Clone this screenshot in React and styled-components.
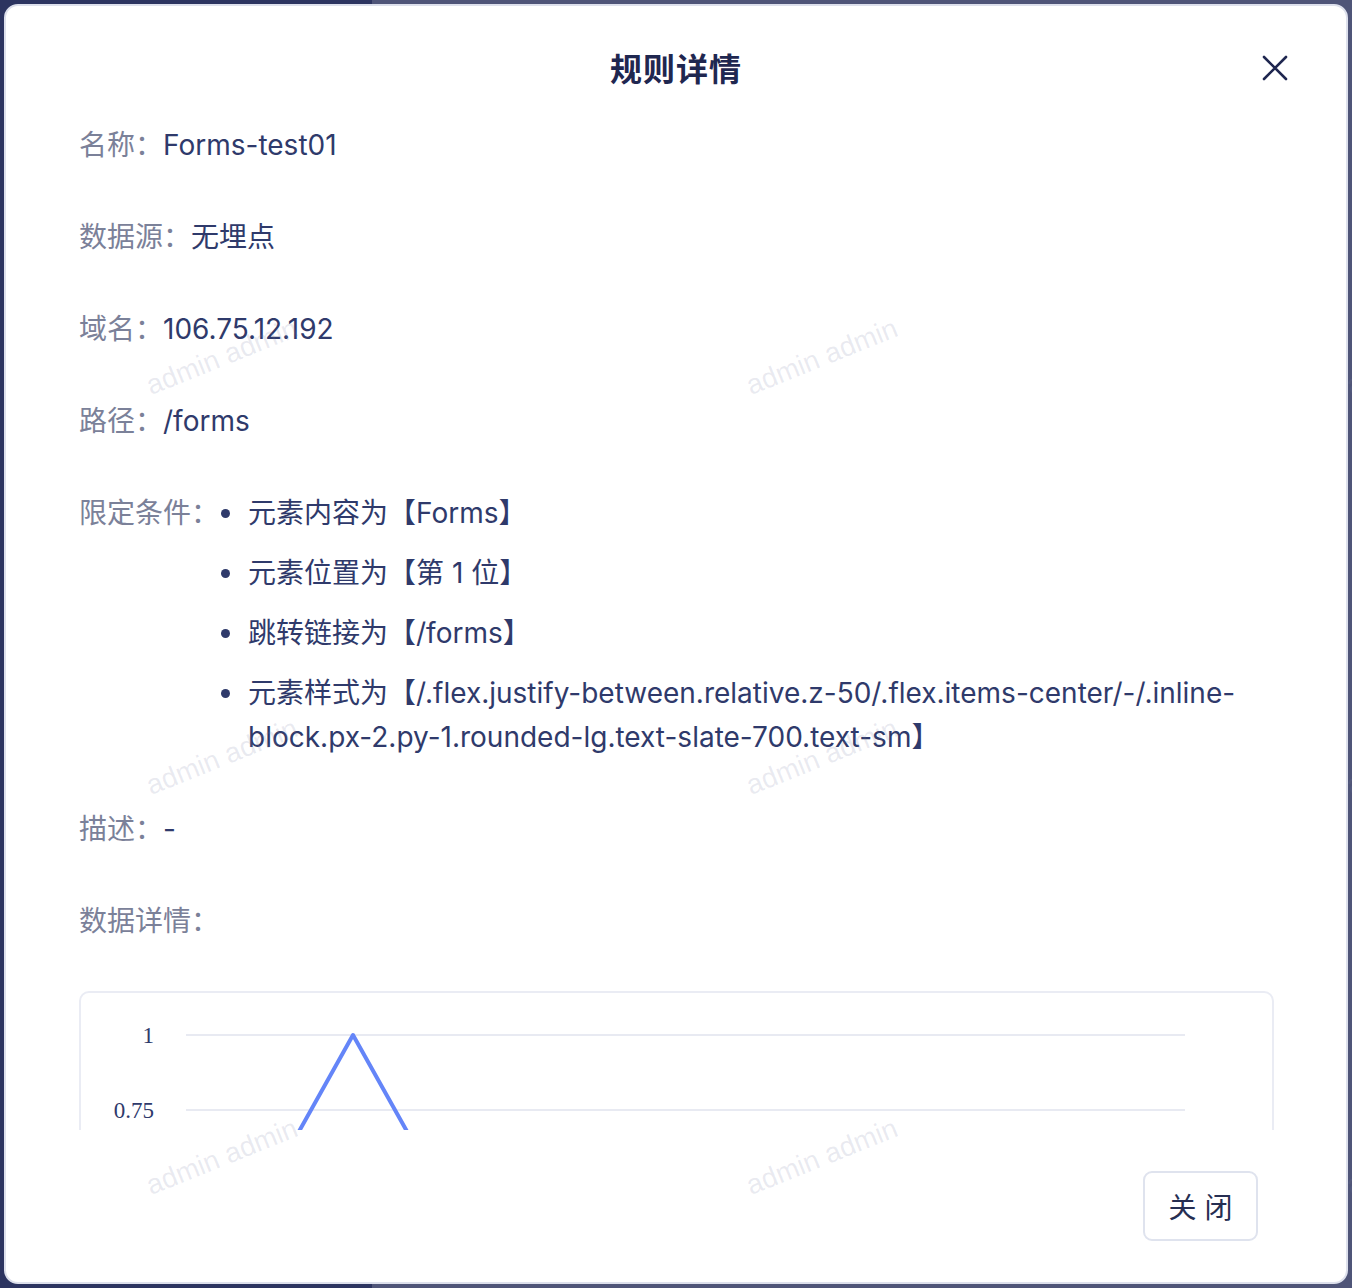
import styled, { createGlobalStyle } from 'styled-components'

const GlobalStyle = createGlobalStyle`
  html, body {
    margin: 0;
    padding: 0;
  }
  body {
    font-family: Inter, "Noto Sans CJK SC", sans-serif;
    -webkit-font-smoothing: antialiased;
  }
  * {
    box-sizing: border-box;
  }
`

const Page = styled.div`
  position: relative;
  display: flex;
  width: 1352px;
  height: 1288px;
  overflow: hidden;
`
const Sidebar = styled.div`
  width: 372px;
  background-color: #2c3460;
`
const Main = styled.div`
  flex: 1;
  background-color: #4f5578;
`
const Overlay = styled.div`
  position: absolute;
  inset: 0;
  padding: 4px;
  display: flex;
`
const Modal = styled.div`
  flex: 1;
  display: flex;
  flex-direction: column;
  background-color: #fff;
  border: 2px solid #dde0ec;
  border-radius: 14px;
  overflow: hidden;
`
const Header = styled.div`
  position: relative;
  display: flex;
  justify-content: center;
  padding-top: 42px;
  height: 100px;
`
const Title = styled.div`
  font-size: 32px;
  line-height: 44px;
  font-weight: 700;
  color: #1f2750;
  letter-spacing: 1px;
`
const CloseBtn = styled.div`
  position: absolute;
  top: 49px;
  right: 58px;
  width: 26px;
  height: 26px;
  cursor: pointer;
`
const Body = styled.div`
  height: 1024px;
  overflow: hidden;
  padding: 17px 72px 0 73px;
  display: flex;
  flex-direction: column;
  gap: 48px;
`
const Row = styled.div`
  display: flex;
  align-items: flex-start;
  font-size: 28px;
  line-height: 44px;
`
const Label = styled.span`
  flex-shrink: 0;
  color: #7b8199;
`
const Value = styled.span`
  color: #2f3a6b;
`
const List = styled.ul`
  list-style: none;
  margin: 0;
  padding: 0;
  flex: 1;
  display: flex;
  flex-direction: column;
  gap: 16px;
`
const Item = styled.li`
  position: relative;
  padding-left: 29px;
  color: #2f3a6b;
  word-break: break-word;
  &::before {
    content: '';
    position: absolute;
    left: 2px;
    top: 18px;
    width: 9px;
    height: 9px;
    border-radius: 50%;
    background-color: #2f3a6b;
  }
`
const ChartBox = styled.div`
  flex-shrink: 0;
  height: 420px;
  border: 2px solid #eaecf4;
  border-radius: 10px;
`
const Footer = styled.div`
  flex: 1;
  display: flex;
  justify-content: flex-end;
  align-items: center;
  padding-right: 88px;
`
const Button = styled.div`
  width: 115px;
  height: 70px;
  display: flex;
  align-items: center;
  justify-content: center;
  border: 2px solid #dfe3ee;
  border-radius: 9px;
  font-size: 28px;
  color: #262e52;
  letter-spacing: 8px;
  padding-left: 8px;
`
const Watermark = styled.span`
  position: absolute;
  transform: translate(-50%, -50%) rotate(-22deg);
  font-family: "Liberation Sans", sans-serif;
  font-size: 28px;
  white-space: nowrap;
  color: rgba(120, 126, 160, 0.16);
  pointer-events: none;
`
const Marks = styled.div`
  position: absolute;
  inset: 0;
  pointer-events: none;
`

const rows = [
  ['名称：', 'Forms-test01'],
  ['数据源：', '无埋点'],
  ['域名：', '106.75.12.192'],
  ['路径：', '/forms'],
]

const conditions = [
  '元素内容为【Forms】',
  '元素位置为【第 1 位】',
  '跳转链接为【/forms】',
  '元素样式为【/.flex.justify-between.relative.z-50/.flex.items-center/-/.inline-block.px-2.py-1.rounded-lg.text-slate-700.text-sm】',
]

function Chart() {
  return (
    <svg width="1190" height="416" viewBox="0 0 1190 416">
      <g stroke="#e8eaf2" strokeWidth="2">
        <line x1="105" y1="42" x2="1104" y2="42" />
        <line x1="105" y1="117" x2="1104" y2="117" />
        <line x1="105" y1="192" x2="1104" y2="192" />
      </g>
      <g fontFamily="'Liberation Serif', serif" fontSize="23" fill="#2f3a6b" textAnchor="end">
        <text x="73" y="50">1</text>
        <text x="73" y="125">0.75</text>
      </g>
      <polyline
        points="188,192 272,42 356,192"
        fill="none"
        stroke="#6485f8"
        strokeWidth="4"
        strokeLinejoin="round"
      />
    </svg>
  )
}

function App() {
  const marks = []
  for (let i = 0; i < 3; i++) {
    for (let j = 0; j < 3; j++) {
      marks.push({ x: 222 + 600 * i, y: 357 + 400 * j })
    }
  }

  return (
    <Page>
      <GlobalStyle />
      <Sidebar />
      <Main />
      <Overlay>
        <Modal>
          <Header>
            <Title>规则详情</Title>
            <CloseBtn>
              <svg width="26" height="26" viewBox="0 0 26 26">
                <path d="M2 2 L24 24 M24 2 L2 24" stroke="#1f2750" strokeWidth="2.6" strokeLinecap="round" />
              </svg>
            </CloseBtn>
          </Header>
          <Body>
            {rows.map(([k, v]) => (
              <Row key={k}>
                <Label>{k}</Label>
                <Value>{v}</Value>
              </Row>
            ))}
            <Row>
              <Label>限定条件：</Label>
              <List>
                {conditions.map((c) => (
                  <Item key={c}>{c}</Item>
                ))}
              </List>
            </Row>
            <Row>
              <Label>描述：</Label>
              <Value>-</Value>
            </Row>
            <Row>
              <Label>数据详情：</Label>
            </Row>
            <ChartBox>
              <Chart />
            </ChartBox>
          </Body>
          <Footer>
            <Button>关闭</Button>
          </Footer>
        </Modal>
      </Overlay>
      <Marks>
        {marks.map((m) => (
          <Watermark key={m.x + '-' + m.y} style={{ left: m.x, top: m.y }}>admin admin</Watermark>
        ))}
      </Marks>
    </Page>
  )
}

export default App
